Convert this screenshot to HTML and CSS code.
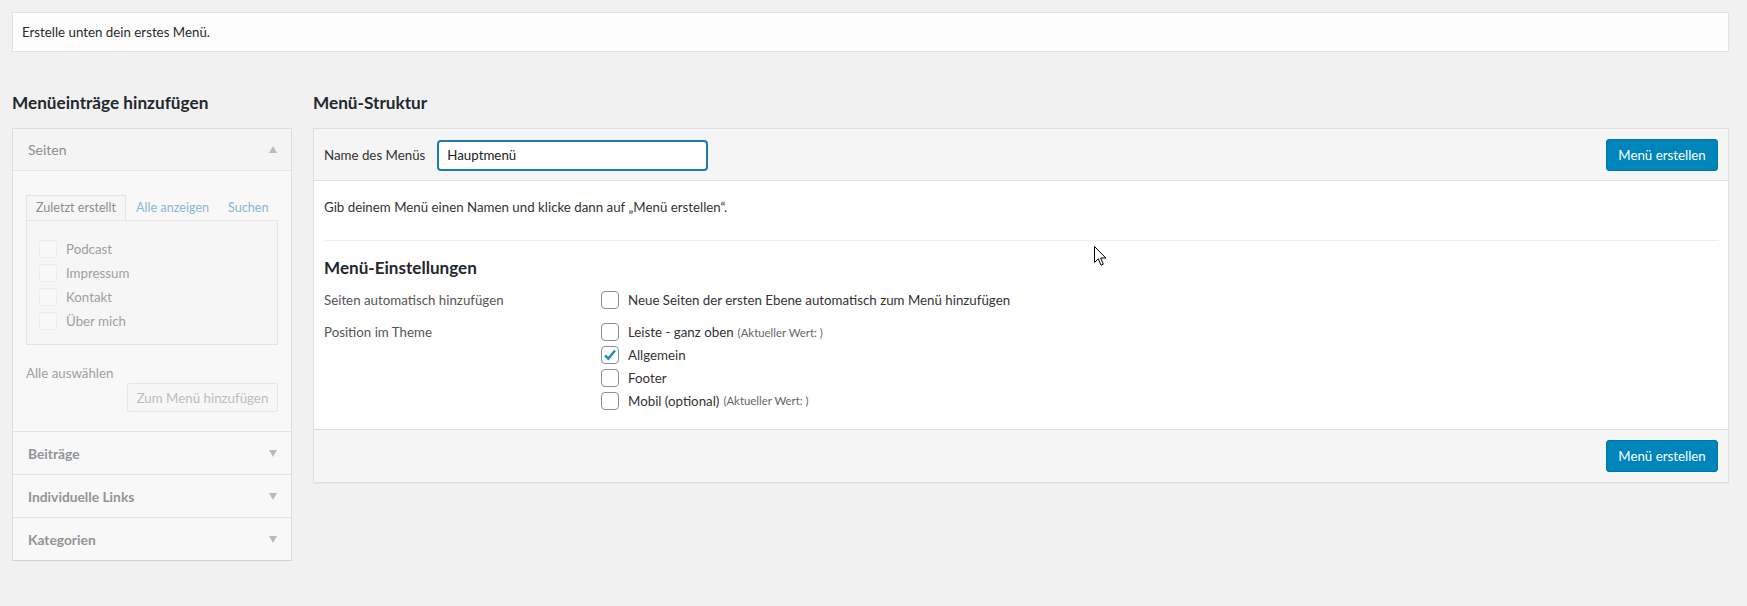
FILE: index.html
```html
<!DOCTYPE html>
<html lang="de">
<head>
    <meta charset="UTF-8">
    <title>Menüs</title>
    <link rel="stylesheet" href="styles.css">
</head>
<body>
    <div class="wrap">
        <div class="notice">Erstelle unten dein erstes Menü.</div>

        <div class="columns">
            <div class="side">
                <h2>Menüeinträge hinzufügen</h2>
                <div class="accordion">
                    <div class="acc-section open">
                        <div class="acc-title">Seiten <span class="arrow up"></span></div>
                        <div class="acc-content">
                            <ul class="tabs">
                                <li class="tab active">Zuletzt erstellt</li>
                                <li class="tab">Alle anzeigen</li>
                                <li class="tab">Suchen</li>
                            </ul>
                            <div class="tab-panel">
                                <label class="page-item"><span class="box"></span>Podcast</label>
                                <label class="page-item"><span class="box"></span>Impressum</label>
                                <label class="page-item"><span class="box"></span>Kontakt</label>
                                <label class="page-item"><span class="box"></span>Über mich</label>
                            </div>
                            <div class="select-all">Alle auswählen</div>
                            <div class="add-row">
                                <button class="add-btn" disabled>Zum Menü hinzufügen</button>
                            </div>
                        </div>
                    </div>
                    <div class="acc-section">
                        <div class="acc-title">Beiträge <span class="arrow down"></span></div>
                    </div>
                    <div class="acc-section">
                        <div class="acc-title">Individuelle Links <span class="arrow down"></span></div>
                    </div>
                    <div class="acc-section">
                        <div class="acc-title">Kategorien <span class="arrow down"></span></div>
                    </div>
                </div>
            </div>

            <div class="main">
                <h2>Menü-Struktur</h2>
                <div class="menu-edit">
                    <div class="menu-header">
                        <label class="name-label" for="menuName">Name des Menüs</label>
                        <input type="text" id="menuName" class="name-input" value="Hauptmenü">
                        <button class="primary">Menü erstellen</button>
                    </div>
                    <div class="menu-body">
                        <p class="hint">Gib deinem Menü einen Namen und klicke dann auf „Menü erstellen“.</p>
                        <div class="settings">
                            <h3>Menü-Einstellungen</h3>
                            <div class="setting-row">
                                <div class="setting-label">Seiten automatisch hinzufügen</div>
                                <div class="setting-input">
                                    <label class="check"><span class="cb"></span>Neue Seiten der ersten Ebene automatisch zum Menü hinzufügen</label>
                                </div>
                            </div>
                            <div class="setting-row">
                                <div class="setting-label">Position im Theme</div>
                                <div class="setting-input">
                                    <label class="check"><span class="cb"></span>Leiste - ganz oben <small>(Aktueller Wert: )</small></label>
                                    <label class="check"><span class="cb"><svg viewBox="0 0 16 16" width="16" height="16"><path d="M3 8.3 L6.3 11.6 L13 3.6" fill="none" stroke="#1e8cbe" stroke-width="2.4"/></svg></span>Allgemein</label>
                                    <label class="check"><span class="cb"></span>Footer</label>
                                    <label class="check"><span class="cb"></span>Mobil (optional) <small>(Aktueller Wert: )</small></label>
                                </div>
                            </div>
                        </div>
                    </div>
                    <div class="menu-footer">
                        <button class="primary">Menü erstellen</button>
                    </div>
                </div>
            </div>
        </div>

        <svg class="cursor" width="14" height="22" viewBox="0 0 14 22">
            <path d="M0.5 0.5 L0.5 16.5 L4.3 12.8 L7 19.2 L9.3 18.2 L6.7 12 L11.8 12 Z" fill="#fff" stroke="#000" stroke-width="1"/>
        </svg>
    </div>
</body>
</html>
```

FILE: styles.css
```css
body {
    margin: 0;
    background: #f1f1f1;
    color: #444;
    font-family: 'Lato', 'Noto Sans', sans-serif;
    font-size: 13.3px;
}

.wrap {
    position: relative;
    padding: 12px 18px 0 12px;
}

.notice {
    background: #fdfdfd;
    border: 1px solid #e2e2e2;
    height: 38px;
    line-height: 38px;
    padding: 0 9px;
    color: #2a2a2a;
}

.columns {
    display: flex;
    gap: 21px;
    margin-top: 39px;
    align-items: flex-start;
}

h2 {
    margin: 0 0 13px;
    font-size: 17.2px;
    line-height: 24px;
    font-weight: bold;
    color: #23282d;
}

/* left column */
.side {
    width: 280px;
    flex: none;
}

.accordion {
    border: 1px solid #dedede;
    border-bottom-color: #d2d2d2;
    box-shadow: 0 1px 1px rgba(0, 0, 0, 0.04);
}

.acc-section {
    background: #f8f8f8;
    border-top: 1px solid #e2e2e2;
}

.acc-section:first-child {
    border-top: none;
}

.acc-title {
    display: flex;
    justify-content: space-between;
    align-items: center;
    height: 42px;
    padding: 0 14px 0 15px;
    font-size: 13.8px;
    font-weight: bold;
    color: #929497;
}

.open .acc-title {
    background: #f4f4f4;
    border-bottom: 1px solid #e6e6e6;
    height: 41px;
    font-size: 14px;
    font-weight: normal;
    color: #8c8e91;
}

.arrow {
    width: 0;
    height: 0;
    border-left: 4.5px solid transparent;
    border-right: 4.5px solid transparent;
}

.arrow.up {
    border-bottom: 7px solid #b8bcc0;
}

.arrow.down {
    border-top: 7px solid #b8bcc0;
}

.acc-content {
    padding: 24px 13px 19px;
}

.tabs {
    display: flex;
    list-style: none;
    margin: 0;
    padding: 0;
    height: 25px;
    font-size: 12.6px;
}

.tab {
    padding: 0 9px;
    line-height: 25px;
    color: #8ab7d2;
    white-space: nowrap;
}

.tab.active {
    color: #8e8e8e;
    background: #f6f6f6;
    border: 1px solid #e4e4e4;
    border-bottom: none;
    line-height: 24px;
    margin-bottom: -1px;
    position: relative;
    height: 25px;
    box-sizing: border-box;
}

.tab + .tab {
    margin-left: 1px;
}

.tab-panel {
    background: #f6f6f6;
    border: 1px solid #e4e4e4;
    padding: 16px 12px 11px;
}

.page-item {
    display: flex;
    align-items: center;
    height: 24px;
    color: #a0a0a0;
}

.page-item .box {
    width: 16px;
    height: 16px;
    border: 1px solid #ececec;
    border-radius: 3px;
    background: #f8f8f8;
    margin-right: 9px;
}

.select-all {
    margin-top: 18px;
    line-height: 20px;
    color: #a0a0a0;
}

.add-row {
    display: flex;
    justify-content: flex-end;
}

.add-btn {
    height: 29px;
    width: 151px;
    background: #f7f7f7;
    border: 1px solid #e6e6e6;
    border-radius: 3px;
    color: #bdbdbd;
    font-family: inherit;
    font-size: 13.3px;
    white-space: nowrap;
}

/* right column */
.main {
    flex: 1;
}

.menu-edit {
    border: 1px solid #dfdfdf;
    background: #fff;
    box-shadow: 0 1px 1px rgba(0, 0, 0, 0.04);
}

.menu-header,
.menu-footer {
    display: flex;
    align-items: center;
    background: #f5f5f5;
    padding: 10px 10px 9px;
}

.menu-header {
    border-bottom: 1px solid #dfdfdf;
}

.menu-footer {
    border-top: 1px solid #dfdfdf;
    justify-content: flex-end;
    padding: 10px;
}

.name-label {
    color: #333;
    margin-right: 12px;
}

.name-input {
    width: 271px;
    height: 31px;
    box-sizing: border-box;
    border: 2px solid #1f7aa8;
    border-radius: 4px;
    padding: 0 8px;
    font-family: inherit;
    font-size: 13.3px;
    color: #222;
    outline: none;
}

.primary {
    margin-left: auto;
    height: 32px;
    width: 112px;
    background: #0085ba;
    border: 1px solid #0073aa;
    border-radius: 3px;
    color: #fff;
    font-family: inherit;
    font-size: 13.3px;
    white-space: nowrap;
}

.menu-body {
    padding: 16px 10px 17px;
}

.hint {
    margin: 0;
    line-height: 20px;
    color: #333;
}

.settings {
    border-top: 1px solid #eee;
    margin-top: 23px;
}

.settings h3 {
    margin: 16px 0 10px;
    font-size: 17.1px;
    line-height: 22px;
    font-weight: bold;
    color: #23282d;
}

.setting-row {
    display: flex;
    margin-bottom: 9px;
}

.setting-row:last-child {
    margin-bottom: 0;
}

.setting-label {
    width: 277px;
    flex: none;
    line-height: 22px;
    color: #555;
}

.setting-input {
    display: flex;
    flex-direction: column;
}

.check {
    display: flex;
    align-items: center;
    height: 22.8px;
    color: #333;
}

.check small {
    font-size: 11.4px;
    color: #666;
    margin-left: 4px;
}

.cb {
    width: 16px;
    height: 16px;
    border: 1px solid #8c8f94;
    border-radius: 4px;
    background: #fff;
    margin-right: 9px;
    display: flex;
    align-items: center;
    justify-content: center;
}

.cursor {
    position: absolute;
    left: 1094px;
    top: 246px;
}
```
